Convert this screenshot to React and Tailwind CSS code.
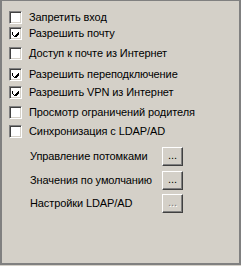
import React from 'react';

const checks = [
  { label: 'Запретить вход', checked: false, mt: 'mt-[10px]' },
  { label: 'Разрешить почту', checked: true, mt: 'mt-[3px]' },
  { label: 'Доступ к почте из Интернет', checked: false, mt: 'mt-[7px]' },
  { label: 'Разрешить переподключение', checked: true, mt: 'mt-[8px]' },
  { label: 'Разрешить VPN из Интернет', checked: true, mt: 'mt-[5px]' },
  { label: 'Просмотр ограничений родителя', checked: false, mt: 'mt-[7px]' },
  { label: 'Синхронизация с LDAP/AD', checked: false, mt: 'mt-[6px]' },
];

const buttons = [
  { label: 'Управление потомками', disabled: false, mt: 'mt-[9px]' },
  { label: 'Значения по умолчанию', disabled: false, mt: 'mt-[5px]' },
  { label: 'Настройки LDAP/AD', disabled: true, mt: 'mt-[4px]' },
];

const CheckBox = ({ checked }) => (
  <div className="w-[13px] h-[13px] shrink-0 bg-white border border-t-[#808080] border-l-[#808080] border-b-white border-r-white shadow-[inset_1px_1px_0_#404040,inset_-1px_-1px_0_#d4d0c8] flex items-center justify-center">
    {checked && (
      <svg width="7" height="7" viewBox="0 0 7 7" shapeRendering="crispEdges">
        <path d="M0 2h1v3h1v1h1v-1h1v-1h1v-1h1v-1h1v3h-1v1h-1v1h-1v1h-1v-1h-1v-1h-1v-1h-1z" fill="#000" />
      </svg>
    )}
  </div>
);

const DotsButton = ({ disabled }) => (
  <div className="w-[21px] h-[19px] shrink-0 bg-[#d4d0c8] border border-t-white border-l-white border-b-[#404040] border-r-[#404040] shadow-[inset_-1px_-1px_0_#808080] flex items-end justify-center pb-[4px]">
    {disabled ? (
      <span className="text-[#808080] text-[11px] leading-none [text-shadow:1px_1px_0_#fff]">...</span>
    ) : (
      <span className="text-black text-[11px] leading-none">...</span>
    )}
  </div>
);

export default function App() {
  return (
    <div className="w-[241px] h-[266px] bg-[#d4d0c8] overflow-hidden">
      <div
        className="w-[241px] h-[265px] border-t border-l-2 border-r-2 border-b-2 border-[#808080] text-[11px] text-black leading-none tracking-[-0.1px]"
        style={{ fontFamily: '"Liberation Sans", Arial, sans-serif' }}
      >
        <div className="pl-[7px] flex flex-col">
          {checks.map((c) => (
            <div key={c.label} className={`${c.mt} h-[13px] flex items-center gap-[7px]`}>
              <CheckBox checked={c.checked} />
              <span className="whitespace-nowrap">{c.label}</span>
            </div>
          ))}
          {buttons.map((b) => (
            <div key={b.label} className={`${b.mt} h-[19px] flex items-center`}>
              <span className="w-[153px] pl-[21px] whitespace-nowrap">{b.label}</span>
              <DotsButton disabled={b.disabled} />
            </div>
          ))}
        </div>
      </div>
    </div>
  );
}
